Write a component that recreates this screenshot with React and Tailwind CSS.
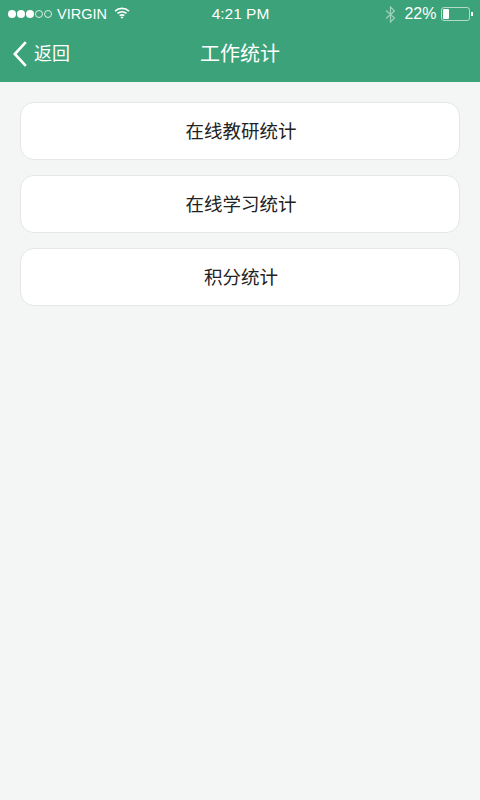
const FONT = { fontFamily: '"Liberation Sans", "Noto Sans CJK SC", sans-serif' };

const ITEMS = ["在线教研统计", "在线学习统计", "积分统计"];

const Signal = () => (
  <div className="flex items-center gap-[1px]">
    {[0, 1, 2].map((i) => (
      <span key={i} className="size-[8px] rounded-full bg-white" />
    ))}
    {[3, 4].map((i) => (
      <span key={i} className="size-[8px] rounded-full border border-white/80" />
    ))}
  </div>
);

const Wifi = () => (
  <svg width="16" height="12" viewBox="0 0 17 13" fill="none" stroke="white" strokeWidth="1.8">
    <path d="M1 4.4C5.2 .6 11.8 .6 16 4.4" />
    <path d="M3.6 7C6.4 4.6 10.6 4.6 13.4 7" />
    <path d="M6 9.4C7.4 8.3 9.6 8.3 11 9.4" />
    <path d="M8.5 12.6L6.9 11C7.9 10.4 9.1 10.4 10.1 11Z" fill="white" stroke="none" />
  </svg>
);

const Bluetooth = () => (
  <svg width="11" height="17" viewBox="0 0 11 17" fill="none" stroke="white" strokeOpacity="0.5" strokeWidth="1.2">
    <path d="M1 4.5L9.5 12L5.5 16V1L9.5 5L1 12.5" />
  </svg>
);

const Battery = () => (
  <div className="flex items-center">
    <div className="flex h-[14px] w-[29px] items-center rounded-[3px] border border-white/60 p-[1px]">
      <div className="h-full w-[6px] rounded-[1px] bg-white" />
    </div>
    <div className="ml-[1px] h-[4px] w-[1.5px] bg-white" />
  </div>
);

export default function App() {
  return (
    <div className="flex min-h-[800px] w-[480px] flex-col bg-[#f4f6f5]" style={FONT}>
      <header className="h-[82px] bg-[#3ca27a] text-white">
        <div className="flex h-[27px] items-center justify-between pl-[8px] pr-[7px] pt-[1px]">
          <div className="flex w-[180px] items-center gap-[5px]">
            <Signal />
            <span className="text-[14.5px] leading-none">VIRGIN</span>
            <span className="ml-[2px] -mt-[2px]"><Wifi /></span>
          </div>
          <span className="text-[15.5px] leading-none">4:21 PM</span>
          <div className="flex w-[180px] items-center justify-end">
            <Bluetooth />
            <span className="ml-[8px] mr-[5px] text-[16px] leading-none">22%</span>
            <Battery />
          </div>
        </div>
        <div className="flex h-[55px] items-center justify-between pb-[1px] pl-[13px] pr-[13px]">
          <div className="flex w-[100px] items-center gap-[7px]">
            <svg width="14" height="26" viewBox="0 0 14 26" fill="none" stroke="white" strokeWidth="2.6">
              <path d="M12.8 1.2L1.8 13L12.8 24.8" />
            </svg>
            <span className="text-[18px] leading-none">返回</span>
          </div>
          <h1 className="text-[20px] font-normal leading-none">工作统计</h1>
          <div className="w-[100px]" />
        </div>
      </header>
      <main className="flex flex-col gap-[15px] px-[20px] pt-[20px]">
        {ITEMS.map((item) => (
          <button
            key={item}
            className="h-[58px] rounded-[14px] border-[1.5px] border-[#e5e7e7] bg-white pl-[2px] pt-[2px] text-center text-[18.5px] text-[#222222]"
          >
            {item}
          </button>
        ))}
      </main>
    </div>
  );
}
